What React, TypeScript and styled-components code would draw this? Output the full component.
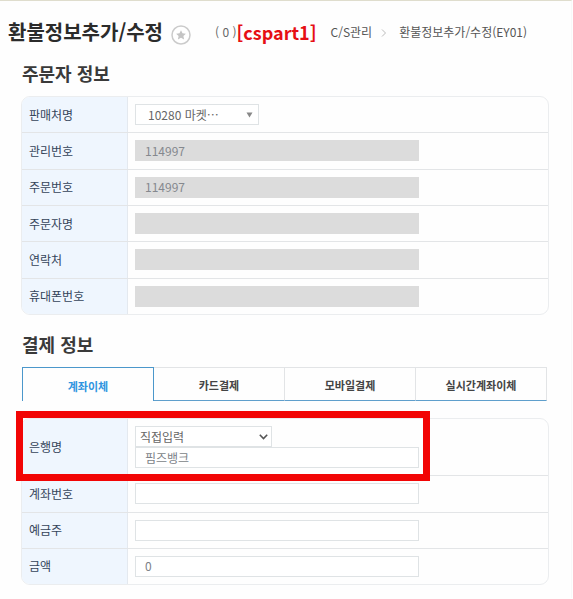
import React, { useState } from "react";
import styled, { createGlobalStyle, css } from "styled-components";

const GlobalStyle = createGlobalStyle`
  *, *::before, *::after { box-sizing: border-box; }
  body {
    margin: 0;
    background: #fefefe;
    color: #333;
    font-family: "Noto Sans CJK KR", "Noto Sans", sans-serif;
    font-size: 12px;
    line-height: 18px;
  }
  button, input, select { font: inherit; color: inherit; margin: 0; }
  h1, h2 { margin: 0; }
`;

const Page = styled.div`
  border-top: 1px solid #dfddcd;
  border-right: 1px solid #f8f8f8;
  margin-right: 1px;
  padding-bottom: 13px;
`;

const Header = styled.header`
  display: flex;
  align-items: center;
  height: 59px;
  padding: 2px 0 0 8px;
  white-space: nowrap;
`;

const PageTitle = styled.h1`
  font-size: 20px;
  line-height: 30px;
  font-weight: 700;
  color: #2b2b2b;
`;

const FavoriteButton = styled.button`
  display: flex;
  margin: 6px 0 0 8px;
  padding: 0;
  border: 0;
  background: none;
`;

const Count = styled.span`
  margin-left: 24px;
  color: #666;
  white-space: pre;
`;

const PartCode = styled.strong`
  font-size: 18px;
  line-height: 30px;
  color: #e60f14;
`;

const Breadcrumb = styled.nav`
  display: flex;
  align-items: center;
  margin-left: 14px;
  color: #555;
`;

const CrumbLink = styled.a`
  color: inherit;
  text-decoration: none;
`;

const Separator = styled.svg`
  margin: 2px 12px 0 9px;
`;

const Section = styled.section`
  padding: 0 22px 0 21px;
  & + & { margin-top: 16px; }
`;

const SectionTitle = styled.h2`
  padding: 0 1px 10px;
  font-size: 18px;
  line-height: 26px;
  font-weight: 700;
  color: #3a3a3a;
`;

const Panel = styled.div<{ $minHeight: number }>`
  display: flex;
  flex-direction: column;
  min-height: ${(p) => p.$minHeight}px;
  border: 1px solid #ebedef;
  border-radius: 9px;
`;

const Row = styled.div`
  position: relative;
  display: flex;
  flex: 1 1 auto;
  & + & { border-top: 1px solid #e3e5e7; }
`;

const Label = styled.label`
  display: flex;
  align-items: center;
  width: 106px;
  padding-left: 7px;
  background: #eff6fe;
  border-right: 1px solid #e4e9ef;
  color: #34445a;
  ${Row}:first-child > & { border-top-left-radius: 8px; }
  ${Row}:last-child > & { border-bottom-left-radius: 8px; }
`;

const Fields = styled.div`
  display: flex;
  flex: 1;
  flex-direction: column;
  justify-content: center;
  padding: 7px;
`;

const control = css`
  height: 21px;
  border: 1px solid #dfe3e5;
  border-radius: 0;
  outline: 0;
  background: #fff;
`;

const TextBox = styled.input`
  ${control}
  width: 284px;
  max-width: 100%;
  padding: 0 9px 1px;
  color: #7b7f87;
  &:read-only {
    background: #dcdcdc;
    border-color: #dcdcdc;
    color: #85888e;
  }
`;

const SelectWrap = styled.div<{ $width: number }>`
  position: relative;
  display: flex;
  width: ${(p) => p.$width}px;
`;

const Select = styled.select<{ $inset: number }>`
  ${control}
  appearance: none;
  width: 100%;
  padding: 0 24px 0 ${(p) => p.$inset}px;
  color: #666;
`;

const SelectMark = styled.svg<{ $right: number }>`
  position: absolute;
  top: 0;
  bottom: 0;
  right: ${(p) => p.$right}px;
  margin: auto 0;
  pointer-events: none;
`;

const Highlight = styled.div`
  position: absolute;
  top: -8px;
  bottom: -6px;
  left: -6px;
  width: 414px;
  border: 7px solid #f20505;
  pointer-events: none;
  z-index: 1;
`;

const Tabs = styled.div`
  display: flex;
  margin: 0 2px 17px 1px;
`;

const Tab = styled.button<{ $active: boolean }>`
  flex: 1;
  height: 34px;
  padding: 2px 0 0;
  border-style: solid;
  border-width: 1px 1px 1px 0;
  border-color: #e2e4e6 #e2e4e6 #5f9fcc;
  background: transparent;
  font-size: 11px;
  font-weight: 700;
  color: #444;
  ${(p) =>
    p.$active &&
    css`
      border-width: 1px 1px 0;
      border-color: #4b97cb;
      color: #2f95e0;
    `}
`;

const orderFields = [
  { id: "manage-no", label: "관리번호", value: "114997" },
  { id: "order-no", label: "주문번호", value: "114997" },
  { id: "orderer", label: "주문자명", value: "" },
  { id: "contact", label: "연락처", value: "" },
  { id: "mobile", label: "휴대폰번호", value: "" },
];

const accountFields = [
  { id: "account-no", label: "계좌번호", value: "" },
  { id: "holder", label: "예금주", value: "" },
  { id: "amount", label: "금액", value: "0" },
];

const tabNames = ["계좌이체", "카드결제", "모바일결제", "실시간계좌이체"];

export default function App() {
  const [tab, setTab] = useState(0);

  return (
    <>
      <GlobalStyle />
      <Page lang="ko">
        <Header>
          <PageTitle>환불정보추가/수정</PageTitle>
          <FavoriteButton type="button" aria-label="즐겨찾기">
            <svg width="20" height="20" viewBox="0 0 20 20">
              <circle cx="10" cy="10" r="9" fill="#fff" stroke="#cbcbcb" strokeWidth="1.5" />
              <path
                d="M10 5.2l1.500 3.100 3.400.400-2.500 2.300.700 3.400-3.100-1.700-3.100 1.700.700-3.400-2.500-2.300 3.400-.400z"
                fill="#c4c4c4"
              />
            </svg>
          </FavoriteButton>
          <Count>( 0 )</Count>
          <PartCode>[cspart1]</PartCode>
          <Breadcrumb aria-label="현재 위치">
            <CrumbLink href="#cs">C/S관리</CrumbLink>
            <Separator width="6" height="8" viewBox="0 0 6 8" fill="none" stroke="#bbb">
              <path d="M1 .5L4.5 4 1 7.5" />
            </Separator>
            <CrumbLink href="#EY01">환불정보추가/수정(EY01)</CrumbLink>
          </Breadcrumb>
        </Header>

        <Section>
          <SectionTitle>주문자 정보</SectionTitle>
          <Panel $minHeight={219}>
            <Row>
              <Label htmlFor="seller">판매처명</Label>
              <Fields>
                <SelectWrap $width={124}>
                  <Select id="seller" $inset={12}>
                    <option>10280 마켓…</option>
                  </Select>
                  <SelectMark $right={6} width="7" height="6" viewBox="0 0 7 6">
                    <path d="M.5 .5h6L3.5 5.5z" fill="#888" />
                  </SelectMark>
                </SelectWrap>
              </Fields>
            </Row>
            {orderFields.map((f) => (
              <Row key={f.id}>
                <Label htmlFor={f.id}>{f.label}</Label>
                <Fields>
                  <TextBox id={f.id} defaultValue={f.value} readOnly />
                </Fields>
              </Row>
            ))}
          </Panel>
        </Section>

        <Section>
          <SectionTitle>결제 정보</SectionTitle>
          <Tabs role="tablist">
            {tabNames.map((name, i) => (
              <Tab
                key={name}
                type="button"
                role="tab"
                aria-selected={i === tab}
                $active={i === tab}
                onClick={() => setTab(i)}
              >
                {name}
              </Tab>
            ))}
          </Tabs>
          <Panel $minHeight={167}>
            <Row>
              <Label htmlFor="bank">은행명</Label>
              <Fields>
                <SelectWrap $width={137}>
                  <Select id="bank" $inset={4}>
                    <option>직접입력</option>
                  </Select>
                  <SelectMark
                    $right={4}
                    width="9"
                    height="6"
                    viewBox="0 0 9 6"
                    fill="none"
                    stroke="#555"
                    strokeWidth="1.6"
                  >
                    <path d="M.8 .8l3.7 3.7L8.2 .8" />
                  </SelectMark>
                </SelectWrap>
                <TextBox aria-label="은행명 직접입력" defaultValue="핌즈뱅크" />
              </Fields>
              <Highlight />
            </Row>
            {accountFields.map((f) => (
              <Row key={f.id}>
                <Label htmlFor={f.id}>{f.label}</Label>
                <Fields>
                  <TextBox id={f.id} defaultValue={f.value} />
                </Fields>
              </Row>
            ))}
          </Panel>
        </Section>
      </Page>
    </>
  );
}
